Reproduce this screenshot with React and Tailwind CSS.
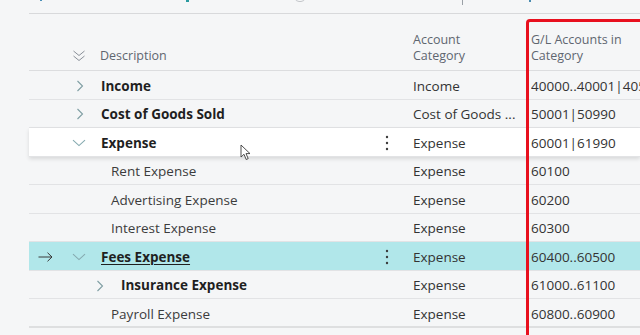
import React from "react";

const FONT = { fontFamily: '"Open Sans", "Noto Sans", "Liberation Sans", sans-serif' };

function ChevronRight({ className = "" }) {
  return (
    <svg width="8" height="12" viewBox="0 0 8 12" className={className}>
      <path d="M1.5 1 L6.5 6 L1.5 11" fill="none" stroke="#7f9ea3" strokeWidth="1.1" />
    </svg>
  );
}

function ChevronDown({ className = "" }) {
  return (
    <svg width="14" height="8" viewBox="0 0 14 8" className={className}>
      <path d="M1 1.2 L7 6.6 L13 1.2" fill="none" stroke="#86aab0" strokeWidth="1.1" />
    </svg>
  );
}

function DoubleChevron() {
  return (
    <svg width="14" height="12" viewBox="0 0 14 12">
      <path d="M1.5 1 L7 5.5 L12.5 1" fill="none" stroke="#8a9099" strokeWidth="1" />
      <path d="M1.5 6 L7 10.5 L12.5 6" fill="none" stroke="#8a9099" strokeWidth="1" />
    </svg>
  );
}

function Kebab() {
  return (
    <svg width="4" height="16" viewBox="0 0 4 16">
      <circle cx="2" cy="2" r="1.2" fill="#3c3c3c" />
      <circle cx="2" cy="8" r="1.2" fill="#3c3c3c" />
      <circle cx="2" cy="14" r="1.2" fill="#3c3c3c" />
    </svg>
  );
}

function Arrow() {
  return (
    <svg width="15" height="10" viewBox="0 0 15 10">
      <path d="M0.5 5 L14 5 M9.5 0.7 L14 5 L9.5 9.3" fill="none" stroke="#3a3a3a" strokeWidth="1" />
    </svg>
  );
}

const rows = [
  { text: "Income", bold: true, chev: "right", textX: 101, chevX: 76, cat: "Income", gl: "40000..40001|405" },
  { text: "Cost of Goods Sold", bold: true, chev: "right", textX: 101, chevX: 76, cat: "Cost of Goods ...", gl: "50001|50990" },
  { text: "Expense", bold: true, chev: "down", textX: 101, chevX: 72, cat: "Expense", gl: "60001|61990", white: true, kebab: true },
  { text: "Rent Expense", textX: 111, cat: "Expense", gl: "60100" },
  { text: "Advertising Expense", textX: 111, cat: "Expense", gl: "60200" },
  { text: "Interest Expense", textX: 111, cat: "Expense", gl: "60300" },
  { text: "Fees Expense", bold: true, underline: true, chev: "down", textX: 101, chevX: 72, cat: "Expense", gl: "60400..60500", teal: true, kebab: true, arrow: true },
  { text: "Insurance Expense", bold: true, chev: "right", textX: 121, chevX: 96, cat: "Expense", gl: "61000..61100" },
  { text: "Payroll Expense", textX: 111, cat: "Expense", gl: "60800..60900" },
];

function Row({ r, last }) {
  const bg = r.teal ? "bg-[#b1e7ea]" : r.white ? "bg-white shadow-[0_2px_4px_rgba(0,0,0,0.12)] relative z-10" : "";
  return (
    <div
      className={`flex items-center h-[28.55px] pt-[2px] ml-[29px] border-b ${last ? "border-b-2 border-[#dedfe0]" : "border-[#e2e3e5]"} ${bg}`}
    >
      <div className="w-[31px] flex items-center pl-[9px]">{r.arrow ? <Arrow /> : null}</div>
      <div className="w-[353px] h-full relative flex items-center">
        {r.chev && (
          <div className="absolute top-0 h-full flex items-center" style={{ left: r.chevX - 60 }}>
            {r.chev === "right" ? <ChevronRight /> : <ChevronDown />}
          </div>
        )}
        <span
          className={`${r.bold ? "font-bold text-[#1f1f1f]" : "text-[#3c3c3c]"} ${r.underline ? "underline underline-offset-2" : ""} text-[13.5px] whitespace-nowrap`}
          style={{ marginLeft: r.textX - 60 }}
        >
          {r.text}
        </span>
        {r.kebab && (
          <div className="absolute left-[325px] top-0 h-full flex items-center">
            <Kebab />
          </div>
        )}
      </div>
      <div className="w-[118px] text-[13.5px] text-[#333333] whitespace-nowrap">{r.cat}</div>
      <div className="flex-1 text-[13.5px] text-[#333333] whitespace-nowrap overflow-hidden">{r.gl}</div>
    </div>
  );
}

export default function App() {
  return (
    <div className="relative w-[640px] h-[335px] overflow-hidden bg-[#f5f6f7]" style={FONT}>
      {/* toolbar remnants */}
      <div className="relative h-[13px]">
        <span className="absolute left-[40px] top-0 w-[2px] h-[1px] bg-[#4a90b8]" />
        <span className="absolute left-[186px] top-0 w-[3px] h-[2px] bg-[#2a9aa0]" />
        <span className="absolute left-[295px] top-[-6px] w-[10px] h-[8px] rounded-sm border border-[#c3c6ca]" />
        <span className="absolute left-[462px] top-0 w-px h-[5px] bg-[#9aa0a6]" />
        <span className="absolute left-[529px] top-0 w-[2px] h-[2px] bg-[#4a8cb0]" />
      </div>
      <div className="ml-[29px] border-t border-[#d8d9db]" />
      {/* header */}
      <div className="flex items-end h-[57px] ml-[29px] border-b border-[#dcdddf] pb-[6px] text-[12.5px] leading-[16px] text-[#5f6670]">
        <div className="w-[31px]" />
        <div className="w-[353px] flex items-center">
          <div className="ml-[12px] w-[28px] pb-[1px]">
            <DoubleChevron />
          </div>
          <span>Description</span>
        </div>
        <div className="w-[118px]">
          <div>Account</div>
          <div>Category</div>
        </div>
        <div className="flex-1">
          <div>G/L Accounts in</div>
          <div>Category</div>
        </div>
      </div>
      {/* rows */}
      <div>
        {rows.map((r, i) => (
          <Row key={i} r={r} last={i === rows.length - 1} />
        ))}
      </div>
      {/* mouse cursor */}
      <svg className="absolute left-[240px] top-[144px] z-20" width="12" height="17" viewBox="0 0 12 17">
        <path d="M1 1 L1 13 L4 10.3 L6.2 15.5 L8.2 14.6 L6 9.6 L10 9.6 Z" fill="white" stroke="#3a3a3a" strokeWidth="0.9" strokeLinejoin="round" />
      </svg>
      {/* red annotation box */}
      <div className="absolute left-[526px] top-[19px] w-[200px] h-[400px] border-[3px] border-[#e8101e] rounded-tl-[4px] z-30 pointer-events-none" />
    </div>
  );
}
